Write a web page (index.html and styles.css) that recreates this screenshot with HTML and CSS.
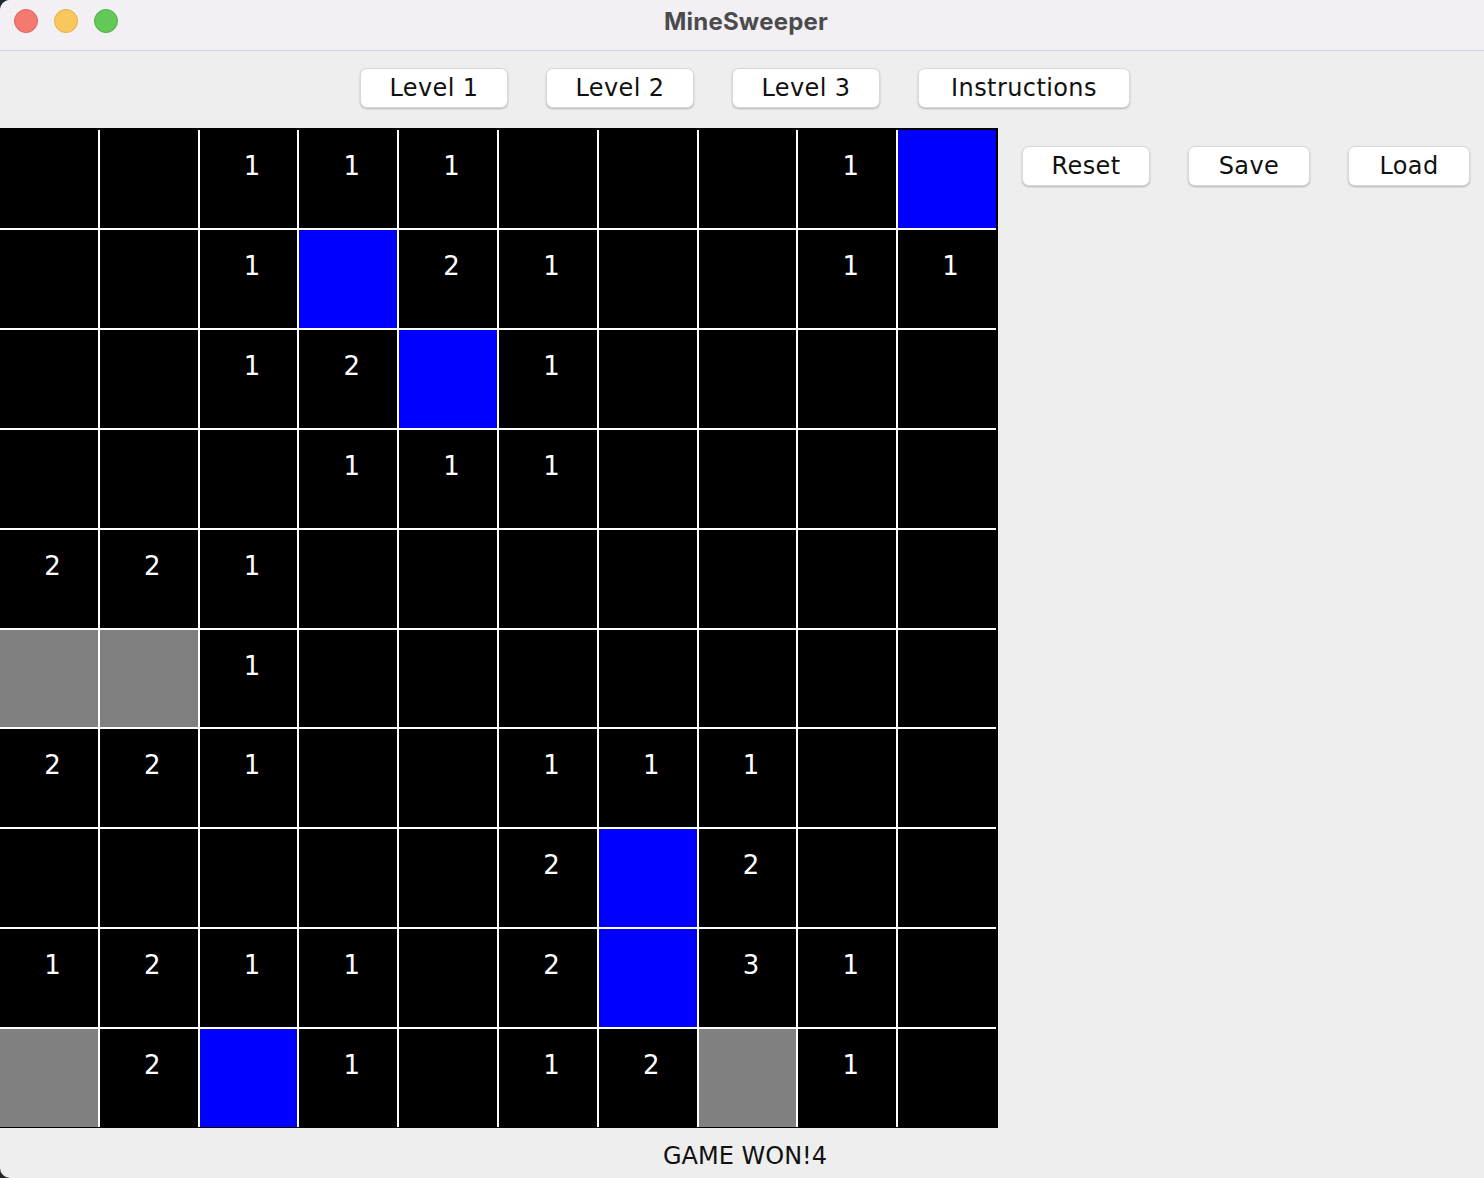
FILE: index.html
```html
<!DOCTYPE html>
<html lang="en">
<head>
<meta charset="utf-8">
<title>MineSweeper</title>
<link rel="stylesheet" href="styles.css">
</head>
<body>
<div class="window">
  <header class="titlebar">
    <div class="lights">
      <span class="light red"></span>
      <span class="light yellow"></span>
      <span class="light green"></span>
    </div>
    <div class="title">MineSweeper</div>
    <div></div>
  </header>
  <nav class="toolbar">
    <button class="btn btn-level">Level 1</button>
    <button class="btn btn-level">Level 2</button>
    <button class="btn btn-level">Level 3</button>
    <button class="btn btn-instr">Instructions</button>
  </nav>
  <main class="main">
    <div class="board">
      <div class="cell"></div><div class="cell"></div><div class="cell">1</div><div class="cell">1</div><div class="cell">1</div><div class="cell"></div><div class="cell"></div><div class="cell"></div><div class="cell">1</div><div class="cell blue"></div>
      <div class="cell"></div><div class="cell"></div><div class="cell">1</div><div class="cell blue"></div><div class="cell">2</div><div class="cell">1</div><div class="cell"></div><div class="cell"></div><div class="cell">1</div><div class="cell">1</div>
      <div class="cell"></div><div class="cell"></div><div class="cell">1</div><div class="cell">2</div><div class="cell blue"></div><div class="cell">1</div><div class="cell"></div><div class="cell"></div><div class="cell"></div><div class="cell"></div>
      <div class="cell"></div><div class="cell"></div><div class="cell"></div><div class="cell">1</div><div class="cell">1</div><div class="cell">1</div><div class="cell"></div><div class="cell"></div><div class="cell"></div><div class="cell"></div>
      <div class="cell">2</div><div class="cell">2</div><div class="cell">1</div><div class="cell"></div><div class="cell"></div><div class="cell"></div><div class="cell"></div><div class="cell"></div><div class="cell"></div><div class="cell"></div>
      <div class="cell gray"></div><div class="cell gray"></div><div class="cell">1</div><div class="cell"></div><div class="cell"></div><div class="cell"></div><div class="cell"></div><div class="cell"></div><div class="cell"></div><div class="cell"></div>
      <div class="cell">2</div><div class="cell">2</div><div class="cell">1</div><div class="cell"></div><div class="cell"></div><div class="cell">1</div><div class="cell">1</div><div class="cell">1</div><div class="cell"></div><div class="cell"></div>
      <div class="cell"></div><div class="cell"></div><div class="cell"></div><div class="cell"></div><div class="cell"></div><div class="cell">2</div><div class="cell blue"></div><div class="cell">2</div><div class="cell"></div><div class="cell"></div>
      <div class="cell">1</div><div class="cell">2</div><div class="cell">1</div><div class="cell">1</div><div class="cell"></div><div class="cell">2</div><div class="cell blue"></div><div class="cell">3</div><div class="cell">1</div><div class="cell"></div>
      <div class="cell gray"></div><div class="cell">2</div><div class="cell blue"></div><div class="cell">1</div><div class="cell"></div><div class="cell">1</div><div class="cell">2</div><div class="cell gray"></div><div class="cell">1</div><div class="cell"></div>
    </div>
    <aside class="side">
      <button class="btn btn-reset">Reset</button>
      <button class="btn btn-small">Save</button>
      <button class="btn btn-small">Load</button>
    </aside>
  </main>
  <footer class="status">GAME WON!4</footer>
</div>
</body>
</html>
```
FILE: styles.css
```css
html, body {
  margin: 0;
  padding: 0;
}
body {
  width: 1484px;
  height: 1178px;
  overflow: hidden;
  background: #1d2830;
  font-family: "DejaVu Sans", "Liberation Sans", sans-serif;
}
.window {
  width: 1484px;
  height: 1178px;
  background: #eeeeee;
  border-radius: 10px 0 0 10px;
  overflow: hidden;
  display: flex;
  flex-direction: column;
}
.titlebar {
  height: 50px;
  flex: none;
  background: #f2f0f5;
  border-bottom: 1px solid #d6d4d9;
  display: grid;
  grid-template-columns: 1fr auto 1fr;
  align-items: center;
}
.lights {
  display: flex;
  gap: 16px;
  padding-left: 14px;
  align-self: start;
  padding-top: 9px;
}
.light {
  width: 24px;
  height: 24px;
  border-radius: 50%;
  box-sizing: border-box;
}
.red { background: #f47a70; border: 1px solid #e0625a; }
.yellow { background: #f8c75e; border: 1px solid #e2ad45; }
.green { background: #63c857; border: 1px solid #4fae45; }
.title {
  font-family: Inter, "Liberation Sans", sans-serif;
  font-weight: 700;
  font-size: 24px;
  color: #4b4b4b;
  padding-left: 8px;
  padding-bottom: 8px;
  letter-spacing: 0.2px;
}
.toolbar {
  height: 77px;
  flex: none;
  box-sizing: border-box;
  padding-top: 17px;
  padding-left: 6px;
  display: flex;
  justify-content: center;
  align-items: flex-start;
  gap: 38px;
}
.btn {
  height: 40px;
  box-sizing: border-box;
  background: #ffffff;
  border: 1px solid #d9d9d9;
  border-radius: 7px;
  box-shadow: 0 1px 2px rgba(0, 0, 0, 0.25);
  font-family: "DejaVu Sans", sans-serif;
  font-size: 24px;
  color: #111111;
  padding: 0;
  line-height: 36px;
  letter-spacing: 0.4px;
}
.btn-level { width: 148px; }
.btn-instr { width: 212px; }
.btn-reset { width: 128px; }
.btn-small { width: 122px; }
.main {
  display: flex;
  flex: none;
  height: 1000px;
}
.board {
  width: 998px;
  height: 1000px;
  flex: none;
  box-sizing: border-box;
  background: #ffffff;
  border-top: 2px solid #000;
  border-right: 2px solid #000;
  border-bottom: 1px solid #000;
  display: grid;
  grid-template-columns: repeat(10, 1fr);
  grid-template-rows: repeat(10, 1fr);
  gap: 2px;
}
.cell {
  background: #000000;
  color: #ffffff;
  font-family: "DejaVu Sans", sans-serif;
  font-size: 26px;
  line-height: 30px;
  text-align: center;
  padding-top: 21px;
  padding-left: 7px;
  box-sizing: border-box;
}
.cell.blue { background: #0000ff; }
.cell.gray { background: #808080; }
.side {
  flex: 1;
  display: flex;
  justify-content: center;
  align-items: flex-start;
  gap: 38px;
  padding-top: 18px;
  padding-left: 10px;
}
.status {
  flex: 1;
  text-align: center;
  padding-left: 6px;
  padding-top: 3px;
  font-size: 24px;
  line-height: 50px;
  color: #111111;
}
```
